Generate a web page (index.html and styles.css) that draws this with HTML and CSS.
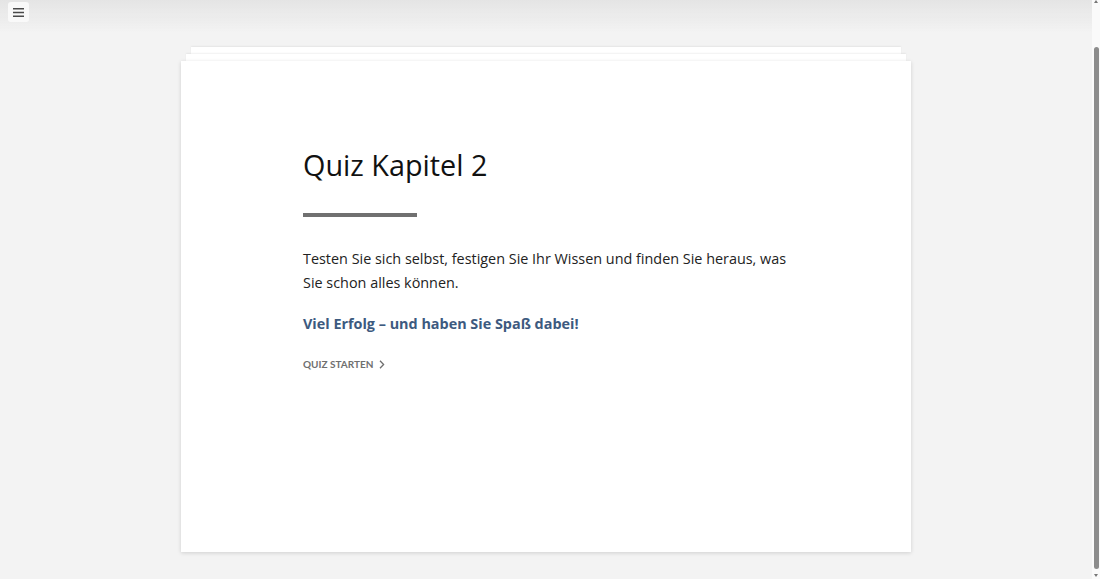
FILE: index.html
```html
<!DOCTYPE html>
<html lang="de">
<head>
<meta charset="utf-8">
<title>Quiz Kapitel 2</title>
<link rel="stylesheet" href="styles.css">
</head>
<body>
<div class="topbar">
  <button class="menu-btn" aria-label="Menü">
    <svg width="11" height="9" viewBox="0 0 11 9"><path d="M0 0.75h11M0 4.5h11M0 8.25h11" stroke="#4a4a4a" stroke-width="1.5"/></svg>
  </button>
</div>
<div class="scrollbar" aria-hidden="true">
  <span class="sb-arrow sb-up"></span>
  <span class="sb-thumb"></span>
  <span class="sb-arrow sb-down"></span>
</div>
<main class="page">
  <div class="stack">
    <div class="sheet sheet-back"></div>
    <div class="sheet sheet-mid"></div>
    <section class="card">
      <div class="content">
        <h1 class="title">Quiz Kapitel 2</h1>
        <div class="rule"></div>
        <p class="intro">Testen Sie sich selbst, festigen Sie Ihr Wissen und finden Sie heraus, was Sie schon alles können.</p>
        <p class="highlight">Viel Erfolg – und haben Sie Spaß dabei!</p>
        <a class="start" href="#">QUIZ STARTEN
          <svg width="6" height="9" viewBox="0 0 6 9"><path d="M1 0.8l3.6 3.7L1 8.2" fill="none" stroke="#6f6f6f" stroke-width="1.3"/></svg>
        </a>
      </div>
    </section>
  </div>
</main>
<script src="script.js"></script>
</body>
</html>
```
FILE: styles.css
```css
html, body {
  margin: 0;
  padding: 0;
}
body {
  background: #f3f3f3;
  font-family: "Open Sans", "Liberation Sans", sans-serif;
}
.topbar {
  position: fixed;
  top: 0;
  left: 0;
  right: 0;
  height: 32px;
  background: linear-gradient(#e4e4e4, rgba(243,243,243,0));
  z-index: 5;
}
.menu-btn {
  position: absolute;
  top: 2px;
  left: 8px;
  width: 21px;
  height: 20px;
  border: 0;
  border-radius: 3px;
  background: #f9f9f9;
  padding: 0;
  display: flex;
  align-items: center;
  justify-content: center;
}
.scrollbar {
  position: fixed;
  top: 0;
  right: 0;
  bottom: 0;
  width: 8px;
  background: #fafafa;
  z-index: 6;
  display: flex;
  flex-direction: column;
  align-items: center;
}
.sb-arrow {
  width: 0;
  height: 0;
  border-left: 2.5px solid transparent;
  border-right: 2.5px solid transparent;
}
.sb-up {
  border-bottom: 3px solid #777;
}
.sb-down {
  border-top: 3px solid #777;
  margin-bottom: 2px;
}
.sb-thumb {
  width: 5px;
  margin: 44px 0 5px;
  flex: 1;
  background: #8c8c8c;
  border-radius: 3px;
}
.page {
  padding: 87px 0 27px 181px;
}
.stack {
  width: 730px;
  display: flex;
  flex-direction: column;
}
.sheet {
  height: 7px;
  background: #fff;
  box-shadow: 0 -1px 2px rgba(0,0,0,0.06);
}
.sheet-back {
  margin: 0 10px;
}
.sheet-mid {
  margin: 0 5px;
}
.card {
  background: #fff;
  height: 491px;
  box-sizing: border-box;
  box-shadow: 0 1px 4px rgba(0,0,0,0.15);
  padding: 86px 0 0 122px;
}
.content {
  width: 500px;
}
.title {
  margin: 0;
  font-size: 28.8px;
  line-height: 36px;
  font-weight: 400;
  color: #111;
}
.rule {
  margin-top: 30px;
  width: 114px;
  height: 4px;
  background: #707070;
}
.intro {
  margin: 30px 0 0;
  font-size: 14.4px;
  line-height: 23.5px;
  font-weight: 400;
  color: #222;
}
.highlight {
  margin: 18px 0 0;
  font-size: 14.4px;
  line-height: 24px;
  font-weight: 700;
  color: #3d5a7f;
}
.start {
  margin-top: 21px;
  display: inline-flex;
  align-items: center;
  gap: 6px;
  font-family: Lato, "Liberation Sans", sans-serif;
  font-weight: 700;
  font-size: 10px;
  line-height: 14px;
  letter-spacing: 0;
  color: #6f6f6f;
  text-decoration: none;
}
```
FILE: script.js
```js
window.scrollTo(0, document.documentElement.scrollHeight);
```
